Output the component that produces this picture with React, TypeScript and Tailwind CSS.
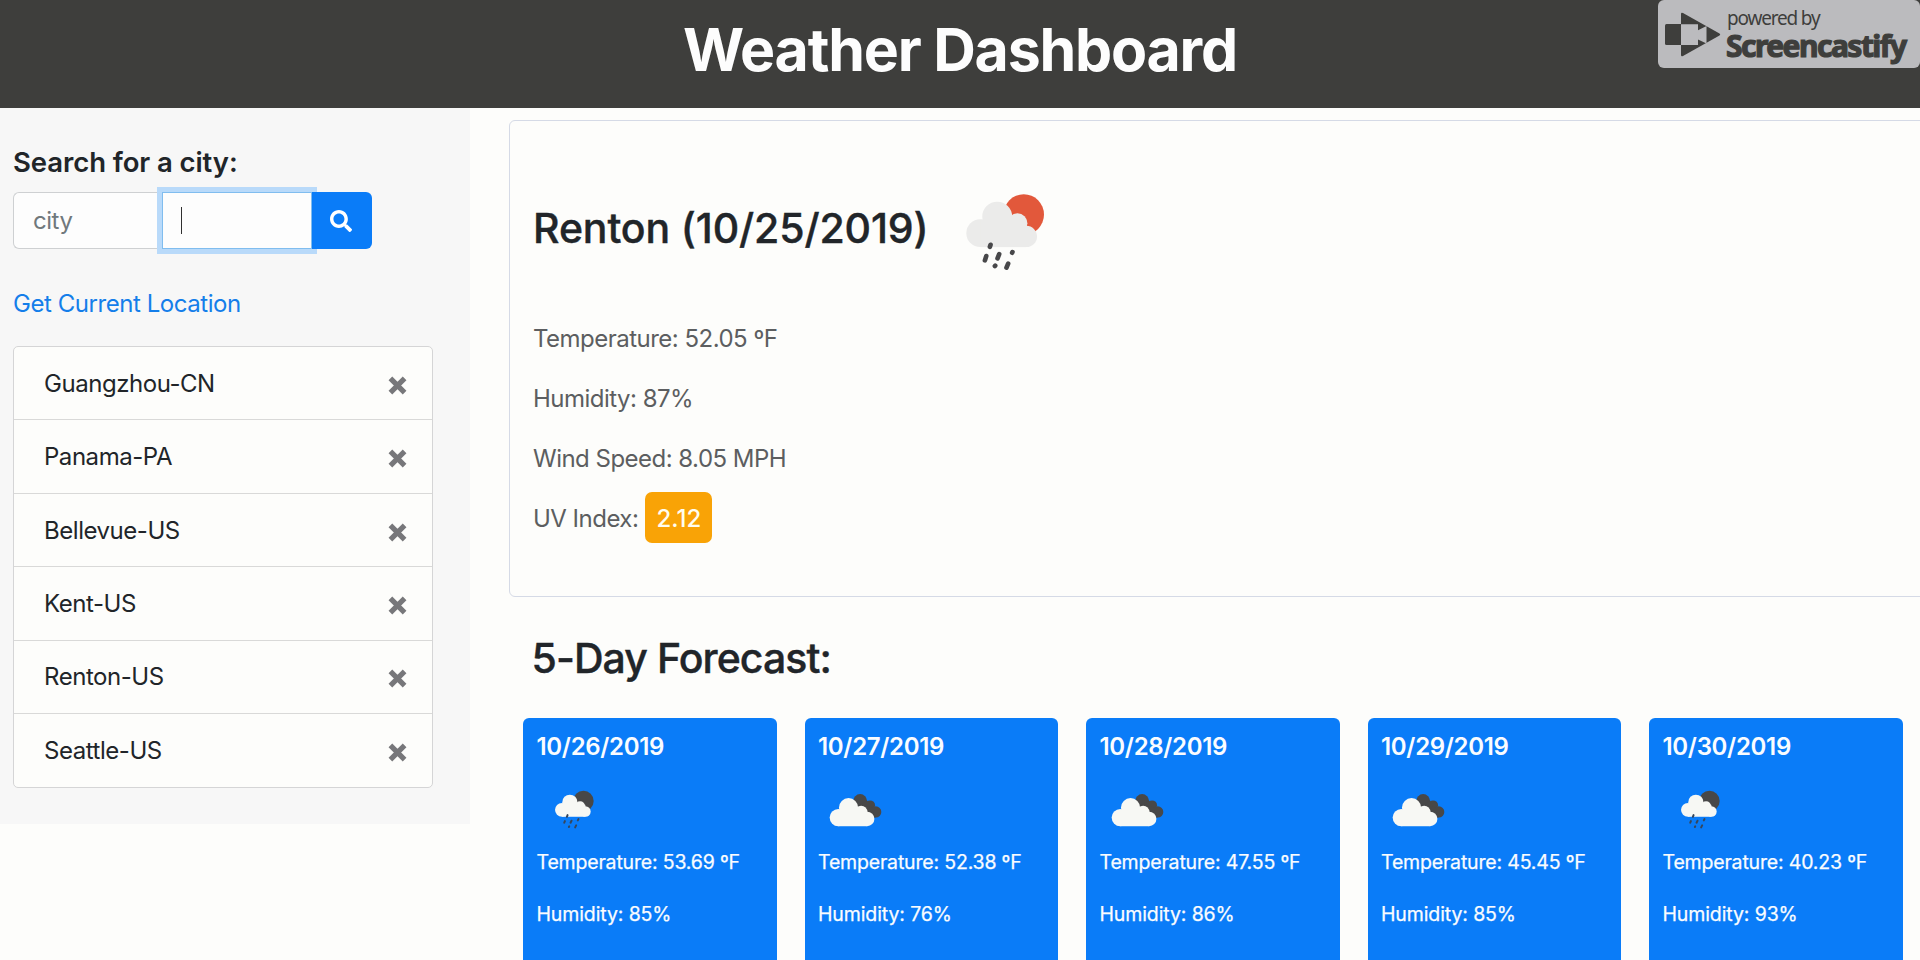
import { FaSearch } from "react-icons/fa";

const cities = ["Guangzhou-CN", "Panama-PA", "Bellevue-US", "Kent-US", "Renton-US", "Seattle-US"];

type Sky = "rain" | "clouds";

const forecast: { date: string; sky: Sky; temp: string; humidity: string }[] = [
  { date: "10/26/2019", sky: "rain", temp: "53.69", humidity: "85" },
  { date: "10/27/2019", sky: "clouds", temp: "52.38", humidity: "76" },
  { date: "10/28/2019", sky: "clouds", temp: "47.55", humidity: "86" },
  { date: "10/29/2019", sky: "clouds", temp: "45.45", humidity: "85" },
  { date: "10/30/2019", sky: "rain", temp: "40.23", humidity: "93" },
];

function SunRainIcon() {
  return (
    <svg className="h-[79px] w-[79px]" viewBox="78 40 238 236">
      <circle cx="252" cy="104" r="61" fill="#e2583b" />
      <g fill="#ebebea">
        <circle cx="121" cy="160" r="42" />
        <circle cx="172" cy="110" r="45" />
        <circle cx="233" cy="130" r="30" />
        <circle cx="260" cy="170" r="32" />
        <rect x="121" y="120" width="139" height="82" />
      </g>
      <g stroke="#48484a" strokeWidth="14" strokeLinecap="round">
        <path d="M152 195l-2 6M139 229l-4 13M178 223l-5 13M218 217l-1 2M166 258l-1 1M205 252l-5 12" />
      </g>
    </svg>
  );
}

function MoonRainIcon() {
  return (
    <svg className="ml-[17px] h-[39px] w-[41px]" viewBox="43 30 122 118">
      <circle cx="131" cy="63" r="31" fill="#484848" />
      <g fill="#f7f8f4">
        <circle cx="66" cy="90" r="21" />
        <circle cx="90" cy="67" r="23" />
        <circle cx="121" cy="79" r="15" />
        <circle cx="137" cy="95" r="16" />
        <rect x="66" y="75" width="71" height="36" />
      </g>
      <g stroke="#35465c" strokeWidth="6" strokeLinecap="round">
        <path d="M83 106l-2 5M75 124l-2 5M95 123l-3 6M116 118l-2 4M88 140l-1 2M109 137l-3 6" />
      </g>
    </svg>
  );
}

function CloudsIcon() {
  return (
    <svg className="ml-[11px] h-[34px] w-[53px]" viewBox="45 40 160 102">
      <g fill="#484848">
        <circle cx="139" cy="64" r="21" />
        <circle cx="169" cy="77" r="15" />
        <circle cx="186" cy="97" r="17" />
        <path d="M130 80L160 62L186 114L150 114z" />
      </g>
      <g fill="#f7f8f4">
        <circle cx="73" cy="114" r="26" />
        <circle cx="104" cy="84" r="29" />
        <circle cx="142" cy="97" r="19" />
        <circle cx="160" cy="118" r="22" />
        <rect x="73" y="94" width="87" height="46" />
      </g>
    </svg>
  );
}

function RemoveIcon() {
  return (
    <svg className="h-[19px] w-[19px]" viewBox="0 0 19 19">
      <path d="M2.4 2.4L16.6 16.6M16.6 2.4L2.4 16.6" stroke="#77777a" strokeWidth="5.2" />
    </svg>
  );
}

function RecorderBadge() {
  return (
    <div className="absolute top-0 right-0 flex h-[68px] w-[262px] rounded-[6px] bg-[#bbbbbe] pl-[7px] text-[#3e3e3c]">
      <svg className="mt-[12px] h-[45px] w-[57px]" viewBox="0 0 57 45">
        <rect x="0" y="12" width="18" height="21" rx="1.5" fill="currentColor" />
        <path d="M16 2Q16 0 18 1L54.5 21.5Q56 22.5 54.5 23.5L18 44Q16 45 16 43z" fill="currentColor" />
        <path d="M16 12.2H33V18.2L41.5 14V31.5L33 27.5V33H16z" fill="#bbbbbe" />
      </svg>
      <div className="ml-[4px] whitespace-nowrap">
        <div className="mt-[6px] ml-[1px] h-[24px] font-['Noto_Sans'] text-[19px] leading-[24px] tracking-[-0.062em]">powered by</div>
        <div className="h-[36px] font-['Noto_Sans'] text-[30px] font-bold leading-[31px] tracking-[-0.051em] [-webkit-text-stroke:1.2px_#3e3e3c]">
          Screencastify
        </div>
      </div>
    </div>
  );
}

export default function App() {
  return (
    <div className="relative h-[960px] w-[1920px] overflow-hidden bg-[#fdfdfb] font-[Inter,sans-serif] text-[#212529]">
      <header className="h-[108px] bg-[#3e3e3c]">
        <h1 className="pt-[2px] text-center text-[59px] font-bold leading-[96px] tracking-[-0.0205em] text-[#fdfdfd]">
          Weather Dashboard
        </h1>
      </header>
      <RecorderBadge />

      <div className="flex">
        <aside className="h-[716px] w-[470px] shrink-0 bg-[#f7f7f7] pt-[37px] pl-[13px]">
          <h2 className="text-[27.5px] font-semibold leading-[34px] tracking-[-0.003em]">Search for a city:</h2>
          <div className="mt-[13px] flex h-[57px] w-[359px]">
            <div className="flex w-[149px] items-center rounded-l-[6px] border border-r-0 border-[#ced0d2] bg-[#fdfdfd] pt-[1px] pl-[19px] text-[24px] tracking-[-0.02em] text-[#70787c]">
              city
            </div>
            <div className="z-10 flex w-[150px] items-center border border-[#80bdef] bg-[#fdfdfd] pl-[18px] shadow-[0_0_0_5px_#b9dafa]">
              <div className="h-[27px] w-px bg-[#303030]" />
            </div>
            <button className="z-20 flex w-[60px] items-center justify-center rounded-r-[6px] bg-[#0a7cf8] pr-[2px] text-white">
              <FaSearch className="h-[22px] w-[22px]" />
            </button>
          </div>
          <a className="mt-[37px] block text-[24px] leading-[36px] tracking-[-0.0186em] text-[#147eea]">Get Current Location</a>
          <ul className="mt-[24px] h-[442px] w-[420px] divide-y divide-[#d9d9d8] rounded-[5px] border border-[#d5d5d6] bg-[#fdfdfb]">
            {cities.map((city) => (
              <li key={city} className="flex h-[73.45px] items-center justify-between pr-[25.5px] pl-[30px]">
                <span className="pt-[1px] text-[24px] leading-[36px] tracking-[-0.019em]">{city}</span>
                <span className="pt-[4px]">
                  <RemoveIcon />
                </span>
              </li>
            ))}
          </ul>
        </aside>

        <main className="w-[1450px] pl-[38.5px]">
          <section className="mt-[12px] h-[477px] w-[1440px] rounded-l-[6px] border border-[#d5dae6] pt-[48px] pl-[23.5px]">
            <div className="flex h-[120px] items-center">
              <h2 className="w-[433px] text-[41px] font-medium tracking-[-0.003em] whitespace-nowrap [-webkit-text-stroke:0.4px_#212529]">
                Renton (10/25/2019)
              </h2>
              <div className="pt-[7px]">
                <SunRainIcon />
              </div>
            </div>
            <div className="mt-[20px] text-[24px] leading-[60px] tracking-[-0.0215em] text-[#5c5e60]">
              <p>Temperature: 52.05 ºF</p>
              <p>Humidity: 87%</p>
              <p>Wind Speed: 8.05 MPH</p>
              <p className="flex items-center">
                UV Index:
                <span className="mb-[3px] ml-[7px] flex h-[51px] w-[67px] items-center justify-center rounded-[7px] bg-[#f9a306] pt-[2px] font-medium tracking-normal text-[#fffdf0]">
                  2.12
                </span>
              </p>
            </div>
          </section>

          <h2 className="mt-[37px] pl-[23px] text-[41px] font-medium leading-[48px] tracking-[-0.0227em] [-webkit-text-stroke:0.4px_#212529]">
            5-Day Forecast:
          </h2>
          <div className="mt-[36px] flex gap-[28px] pl-[14.5px]">
            {forecast.map((day) => (
              <article key={day.date} className="h-[260px] w-[253.5px] shrink-0 rounded-[6px] bg-[#0a7cf8] pt-[14px] pl-[13.5px] text-[#fafcff]">
                <h3 className="text-[24px] font-semibold leading-[29px] tracking-[-0.013em]">{day.date}</h3>
                <div className="mt-[29px] flex h-[39px] items-center">
                  {day.sky === "rain" ? <MoonRainIcon /> : <CloudsIcon />}
                </div>
                <p className="mt-[21px] text-[19.5px] leading-[24px] tracking-[-0.009em] [-webkit-text-stroke:0.25px_#fafcff]">
                  Temperature: {day.temp} ºF
                </p>
                <p className="mt-[28px] text-[19.5px] leading-[24px] tracking-[-0.006em] [-webkit-text-stroke:0.25px_#fafcff]">
                  Humidity: {day.humidity}%
                </p>
              </article>
            ))}
          </div>
        </main>
      </div>
    </div>
  );
}
